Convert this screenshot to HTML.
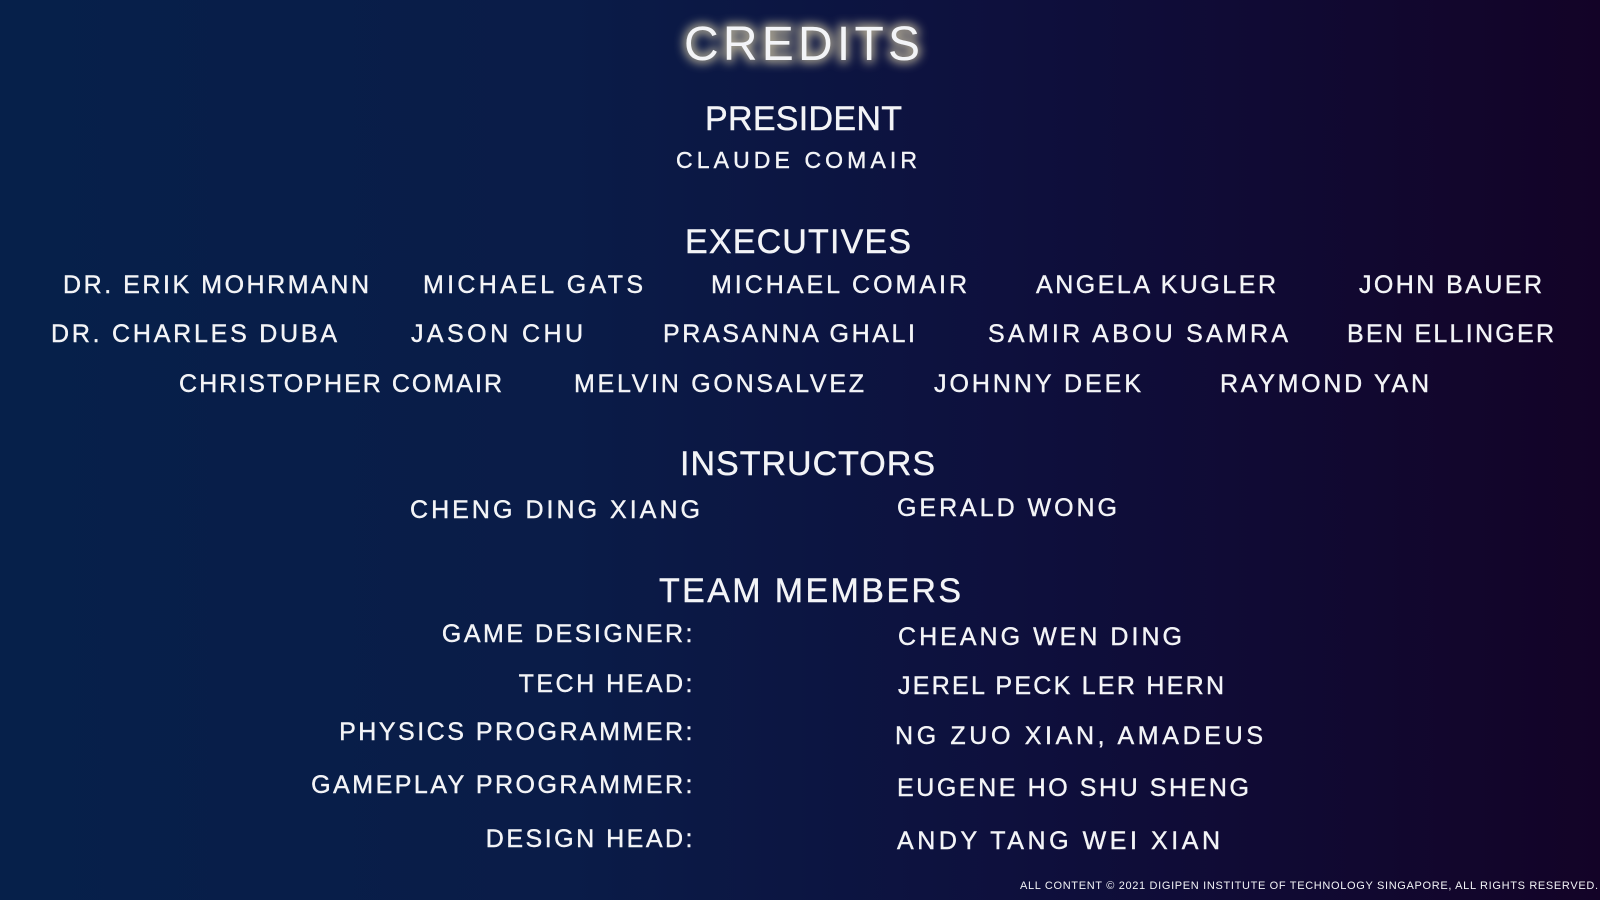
<!DOCTYPE html>
<html><head><meta charset="utf-8"><style>
html,body{margin:0;padding:0;width:1600px;height:900px;overflow:hidden}
body{background:linear-gradient(90deg,#06204a 0%,#0a1c48 35%,#0e0f3c 65%,#130327 100%)}
svg{position:absolute;left:0;top:0}
text{font-family:"Liberation Sans",sans-serif;fill:#f3f4f7}
.s text{stroke:#f3f4f7;stroke-width:0.4}
g.r text{letter-spacing:2.5px}
</style></head><body>
<svg width="1600" height="900" viewBox="0 0 1600 900">
<defs><filter id="g" x="-20%" y="-50%" width="140%" height="200%"><feGaussianBlur stdDeviation="5"/></filter></defs>
<g font-size="48">
<text x="684" y="60" textLength="236" lengthAdjust="spacing" style="fill:#e8dcb0;stroke:#e8dcb0;stroke-width:5" filter="url(#g)" opacity="0.8">CREDITS</text>
<text x="684" y="60" textLength="236" lengthAdjust="spacing">CREDITS</text>
</g>
<g class="s">
<g font-size="34">
<text x="705" y="130" textLength="197" lengthAdjust="spacing">PRESIDENT</text>
<text x="685" y="253" textLength="226" lengthAdjust="spacing">EXECUTIVES</text>
<text x="680" y="475" textLength="255" lengthAdjust="spacing">INSTRUCTORS</text>
<text x="659" y="602" textLength="302" lengthAdjust="spacing">TEAM MEMBERS</text>
</g>
<g font-size="23">
<text x="676" y="168" textLength="241" lengthAdjust="spacing">CLAUDE COMAIR</text>
</g>
<g font-size="25">
<text x="63" y="293" textLength="306" lengthAdjust="spacing">DR. ERIK MOHRMANN</text>
<text x="423" y="293" textLength="220" lengthAdjust="spacing">MICHAEL GATS</text>
<text x="711" y="293" textLength="256" lengthAdjust="spacing">MICHAEL COMAIR</text>
<text x="1036" y="293" textLength="240" lengthAdjust="spacing">ANGELA KUGLER</text>
<text x="1359" y="293" textLength="183" lengthAdjust="spacing">JOHN BAUER</text>
<text x="51" y="342" textLength="286" lengthAdjust="spacing">DR. CHARLES DUBA</text>
<text x="411" y="342" textLength="172" lengthAdjust="spacing">JASON CHU</text>
<text x="663" y="342" textLength="252" lengthAdjust="spacing">PRASANNA GHALI</text>
<text x="988" y="342" textLength="300" lengthAdjust="spacing">SAMIR ABOU SAMRA</text>
<text x="1347" y="342" textLength="207" lengthAdjust="spacing">BEN ELLINGER</text>
<text x="179" y="392" textLength="323" lengthAdjust="spacing">CHRISTOPHER COMAIR</text>
<text x="574" y="392" textLength="290" lengthAdjust="spacing">MELVIN GONSALVEZ</text>
<text x="934" y="392" textLength="207" lengthAdjust="spacing">JOHNNY DEEK</text>
<text x="1220" y="392" textLength="209" lengthAdjust="spacing">RAYMOND YAN</text>
<text x="410" y="518" textLength="290" lengthAdjust="spacing">CHENG DING XIANG</text>
<text x="897" y="516" textLength="220" lengthAdjust="spacing">GERALD WONG</text>
<g class="r" text-anchor="end">
<text x="695" y="642">GAME DESIGNER:</text>
<text x="695" y="692">TECH HEAD:</text>
<text x="695" y="740">PHYSICS PROGRAMMER:</text>
<text x="695" y="793">GAMEPLAY PROGRAMMER:</text>
<text x="695" y="847">DESIGN HEAD:</text>
</g>
<text x="898" y="645" textLength="284" lengthAdjust="spacing">CHEANG WEN DING</text>
<text x="898" y="694" textLength="326" lengthAdjust="spacing">JEREL PECK LER HERN</text>
<text x="895" y="744" textLength="368" lengthAdjust="spacing">NG ZUO XIAN, AMADEUS</text>
<text x="897" y="796" textLength="352" lengthAdjust="spacing">EUGENE HO SHU SHENG</text>
<text x="897" y="849" textLength="323" lengthAdjust="spacing">ANDY TANG WEI XIAN</text>
</g>
</g>
<text x="1020" y="889" font-size="11" textLength="578" lengthAdjust="spacing">ALL CONTENT © 2021 DIGIPEN INSTITUTE OF TECHNOLOGY SINGAPORE, ALL RIGHTS RESERVED.</text>
</svg>
</body></html>
